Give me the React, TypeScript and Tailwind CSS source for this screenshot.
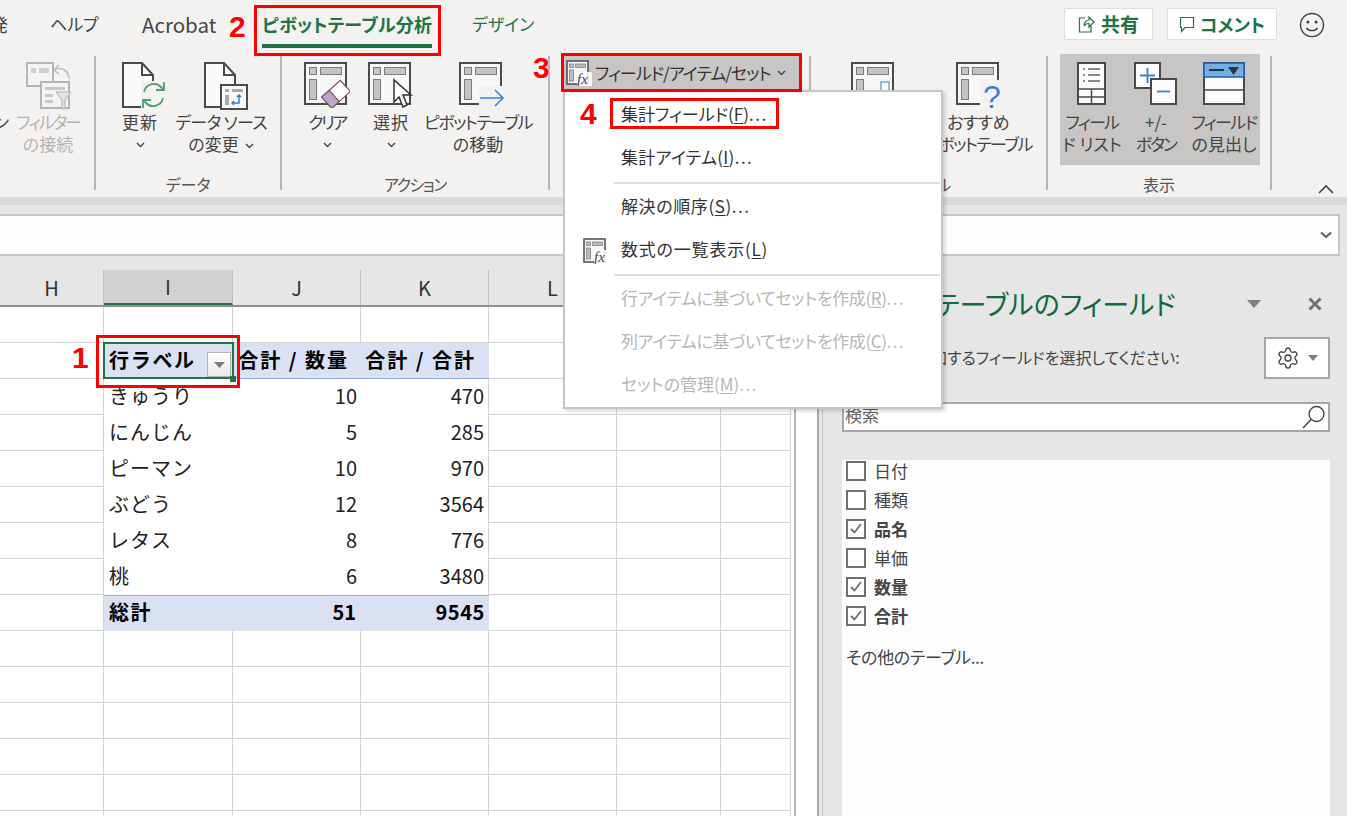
import type { ReactNode } from 'react';
import { Settings } from 'lucide-react';

const FONT = "[font-family:'Noto_Sans_CJK_JP','Noto_Sans',sans-serif] [font-feature-settings:'palt']";

function PivotBase({ children, w = 44, h = 46 }: { children?: ReactNode; w?: number; h?: number }) {
  return (
    <svg width={w} height={h} viewBox={`0 0 ${w} ${h}`}>
      <rect x="1" y="1" width="41" height="41" fill="#f7f7f7" stroke="#4a4a4a" strokeWidth="2" />
      <rect x="5.5" y="5.5" width="7" height="7" fill="#c4c4c4" stroke="#7a7a7a" />
      <rect x="16.5" y="5.5" width="21" height="7" fill="#c4c4c4" stroke="#7a7a7a" />
      <rect x="5.5" y="17.5" width="7" height="20" fill="#c4c4c4" stroke="#7a7a7a" />
      {children}
    </svg>
  );
}

function PageBase({ children }: { children?: ReactNode }) {
  return (
    <svg width="44" height="48" viewBox="0 0 44 48">
      <path d="M1 1H20L31 13V45H1Z" fill="#fafafa" stroke="#4a4a4a" strokeWidth="2" />
      <path d="M20 1V13H31" fill="none" stroke="#4a4a4a" strokeWidth="2" />
      {children}
    </svg>
  );
}

function FxIcon({ size = 26 }: { size?: number }) {
  return (
    <svg width={size} height={size} viewBox="0 0 26 26">
      <rect x="1" y="1" width="21" height="23" fill="#f4f4f4" stroke="#555" strokeWidth="1.6" />
      <rect x="3.5" y="4" width="4" height="3.5" fill="#bbb" stroke="#777" strokeWidth=".7" />
      <rect x="9.5" y="4" width="10" height="3.5" fill="#bbb" stroke="#777" strokeWidth=".7" />
      <rect x="3.5" y="10" width="4" height="11" fill="#bbb" stroke="#777" strokeWidth=".7" />
      <rect x="11" y="12" width="15" height="14" fill="#fff" opacity=".85" />
      <text x="11" y="24" fontSize="15" fontStyle="italic" fontFamily="Liberation Serif, serif" fill="#444">fx</text>
    </svg>
  );
}

function Chevron({ className = '' }: { className?: string }) {
  return (
    <svg width="9" height="6" viewBox="0 0 9 6" className={className}>
      <path d="M1 1l3.500 3.500L8 1" fill="none" stroke="#444" strokeWidth="1.400" />
    </svg>
  );
}

function Item({ width, icon, lines, tracks = [], chevron, inlineChevron, disabled, iconPad = '' }: {
  width: string;
  icon?: ReactNode;
  lines: string[];
  tracks?: string[];
  chevron?: boolean;
  inlineChevron?: boolean;
  disabled?: boolean;
  iconPad?: string;
}) {
  return (
    <div className={`${width} flex shrink-0 flex-col items-center`}>
      <div className={`flex h-[55px] w-full items-start justify-center pt-[6px] ${iconPad}`}>{icon}</div>
      <div className={`whitespace-nowrap text-center text-[17px] leading-[22px] ${disabled ? 'text-[#b5b3b1]' : 'text-[#444]'}`}>
        {lines.map((l, i) => (
          <div key={l} className={tracks[i] ?? ''}>
            {l}
            {inlineChevron && i === lines.length - 1 && <Chevron className="ml-[6px] inline-block align-middle" />}
          </div>
        ))}
      </div>
      {chevron && <Chevron className="mt-[9px]" />}
    </div>
  );
}

function Group({ width, label, labelClass = '', children }: { width: string; label?: string; labelClass?: string; children: ReactNode }) {
  return (
    <div className={`${width} flex h-full shrink-0 flex-col border-r-2 border-[#b8b6b4]`}>
      <div className="flex min-h-0 flex-1">{children}</div>
      <div className={`mb-[-5px] h-[22px] text-center text-[16px] leading-[22px] text-[#555] ${labelClass}`}>{label}</div>
    </div>
  );
}

function Ribbon() {
  return (
    <div className="flex h-[149px] bg-[#f3f2f1] pt-[8px] pb-[7px]">
      <Group width="w-[96px]">
        <div className="w-[9px] shrink-0 overflow-hidden pt-[55px] text-right text-[17px] leading-[22px] text-[#444]">
          <span className="float-right">ン</span>
        </div>
        <Item
          width="w-[78px]"
          disabled
          lines={['フィルター', 'の接続']}
          tracks={['tracking-[-2.2px]']}
          iconPad="pl-[4px]"
          icon={
            <svg width="48" height="50" viewBox="0 0 48 50">
              <rect x="1" y="1" width="26" height="23" fill="#f4f4f4" stroke="#b5b5b5" strokeWidth="2" />
              <rect x="5" y="6" width="5" height="5" fill="#d0d0d0" />
              <rect x="13" y="6" width="10" height="5" fill="#d0d0d0" />
              <path d="M28 8c8-4 15 1 15 9M28 8l5-5M28 8l5 4" fill="none" stroke="#bdbdbd" strokeWidth="1.500" />
              <rect x="15" y="20" width="28" height="26" fill="#f4f4f4" stroke="#b5b5b5" strokeWidth="2" />
              <rect x="19" y="25" width="20" height="3" fill="#c8c8c8" />
              <rect x="19" y="32" width="8" height="3" fill="#c8c8c8" />
              <rect x="19" y="38" width="8" height="3" fill="#c8c8c8" />
              <path d="M30 30h15l-6 8v9h-3v-9Z" fill="#e4e4e4" stroke="#b0b0b0" />
            </svg>
          }
        />
      </Group>
      <Group width="w-[186px]" label="データ">
        <div className="w-[16px] shrink-0" />
        <Item
          width="w-[56px]"
          lines={['更新']}
          tracks={['tracking-[1px]']}
          chevron
          iconPad="pl-[8px]"
          icon={
            <PageBase>
              <rect x="19" y="19" width="25" height="28" fill="#f3f2f1" />
              <path d="M22 30a10 10 0 0 1 17-5l3 3M42 20v8h-8M41 36a10 10 0 0 1-17 5l-3-3M21 46v-8h8" fill="none" stroke="#4c9f70" strokeWidth="1.800" />
            </PageBase>
          }
        />
        <Item
          width="w-[106px]"
          lines={['データ ソース', 'の変更']}
          tracks={['tracking-[-0.7px]']}
          inlineChevron
          iconPad="pl-[10px]"
          icon={
            <PageBase>
              <rect x="17" y="23" width="26" height="24" fill="#f7f7f7" stroke="#4a4a4a" strokeWidth="2" />
              <rect x="21" y="27" width="4" height="3" fill="#aaa" />
              <rect x="28" y="27" width="11" height="3" fill="#aaa" />
              <rect x="21" y="33" width="4" height="10" fill="#aaa" />
              <path d="M35 33v8h-7M33 35l2-2 2 2M30 39l-2 2 2 2" fill="none" stroke="#2a7fd0" strokeWidth="1.500" />
            </PageBase>
          }
        />
      </Group>
      <Group width="w-[268px]" label="アクション" labelClass="tracking-[-1.5px]">
        <div className="w-[13px] shrink-0" />
        <Item
          width="w-[64px]"
          lines={['クリア']}
          tracks={['tracking-[-2.5px]']}
          chevron
          icon={
            <PivotBase w={46}>
              <g transform="rotate(-42 32 33)">
                <rect x="20" y="25" width="25" height="15" fill="#fff" stroke="#8a4d66" strokeWidth="1.200" />
                <rect x="20" y="25" width="10" height="15" fill="#b9a6cc" stroke="#8a4d66" strokeWidth="1.200" />
              </g>
            </PivotBase>
          }
        />
        <Item
          width="w-[64px]"
          lines={['選択']}
          tracks={['tracking-[1px]']}
          chevron
          icon={
            <PivotBase w={46}>
              <path d="M26 18L26 40L31 35L35 45L39 43L35 33L43 33Z" fill="#fff" stroke="#333" strokeWidth="1.500" />
            </PivotBase>
          }
        />
        <Item
          width="w-[110px]"
          lines={['ピボットテーブル', 'の移動']}
          tracks={['tracking-[-1.6px]']}
          iconPad="pl-[7px]"
          icon={
            <PivotBase w={46}>
              <rect x="20" y="24" width="26" height="20" fill="#f3f2f1" />
              <path d="M21 36H44M36 28l8 8-8 8" fill="none" stroke="#2f86d6" strokeWidth="1.500" />
            </PivotBase>
          }
        />
      </Group>
      <Group width="w-[261px]" label=" ">
        <div className="ml-[13px] mt-[-1px] flex h-[35px] w-[238px] items-center bg-[#c8c6c4] pl-[3px] text-[17px] text-[#333]">
          <FxIcon />
          <span className="ml-[3px] whitespace-nowrap tracking-[-1px]">フィールド/アイテム/セット</span>
          <Chevron className="ml-[6px]" />
        </div>
      </Group>
      <Group width="w-[237px]" label="ツール">
        <div className="w-[22px] shrink-0" />
        <Item
          width="w-[80px]"
          lines={[]}
          icon={
            <PivotBase>
              <rect x="30" y="20" width="8" height="22" fill="#fff" stroke="#2a7fd0" />
            </PivotBase>
          }
        />
        <div className="w-[10px] shrink-0" />
        <Item
          width="w-[110px]"
          lines={['おすすめ', 'ピボットテーブル']}
          tracks={['tracking-[-0.6px]', 'tracking-[-1.6px]']}
          iconPad="pl-[6px]"
          icon={
            <PivotBase w={50}>
              <rect x="24" y="18" width="26" height="28" fill="#f3f2f1" />
              <text x="27" y="46" fontSize="32" fontFamily="Liberation Sans, sans-serif" fill="#2f86d6">?</text>
            </PivotBase>
          }
        />
      </Group>
      <Group width="w-[224px]" label="表示">
        <div className="ml-[12px] mt-[-2px] flex h-[111px] w-[200px] bg-[#c8c6c4] pt-[2px]">
          <Item
            width="w-[64px]"
            lines={['フィール', 'ド リスト']}
            tracks={['tracking-[-1.7px]']}
            icon={
              <svg width="30" height="44" viewBox="0 0 30 44">
                <rect x="1" y="1" width="27" height="41" fill="#fbfbfb" stroke="#4a4a4a" strokeWidth="2" />
                <path d="M6 7h2M11 7h12M6 13h2M11 13h12M6 19h2M11 19h12" stroke="#666" strokeWidth="1.500" />
                <path d="M1 27H28M1 35H28M14.500 27V42" stroke="#4a4a4a" strokeWidth="1.500" />
              </svg>
            }
          />
          <Item
            width="w-[64px]"
            lines={['+/-', 'ボタン']}
            tracks={['', 'tracking-[-2px]']}
            icon={
              <svg width="44" height="44" viewBox="0 0 44 44">
                <rect x="1" y="1" width="25" height="25" fill="#fbfbfb" stroke="#4a4a4a" strokeWidth="2" />
                <path d="M13.500 6v15M6 13.500h15" stroke="#2f86d6" strokeWidth="1.800" />
                <rect x="17" y="17" width="25" height="25" fill="#fbfbfb" stroke="#4a4a4a" strokeWidth="2" />
                <path d="M23 29.500h13" stroke="#2f86d6" strokeWidth="1.800" />
              </svg>
            }
          />
          <Item
            width="w-[72px]"
            lines={['フィールド', 'の見出し']}
            tracks={['tracking-[-1.6px]']}
            icon={
              <svg width="42" height="44" viewBox="0 0 42 44">
                <rect x="1" y="1" width="40" height="41" fill="#fbfbfb" stroke="#4a4a4a" strokeWidth="2" />
                <rect x="1" y="1" width="40" height="14" fill="#72aee6" stroke="#1f5fa8" strokeWidth="1.500" />
                <path d="M6 8h15" stroke="#333" strokeWidth="2" />
                <path d="M25 5h11l-5.500 8Z" fill="#333" />
                <path d="M1 28H41" stroke="#4a4a4a" strokeWidth="1.500" />
              </svg>
            }
          />
        </div>
      </Group>
      <div className="ml-[46px] mb-[-4px] self-end">
        <svg width="16" height="10" viewBox="0 0 16 10">
          <path d="M1 9l7-7 7 7" fill="none" stroke="#444" strokeWidth="1.600" />
        </svg>
      </div>
    </div>
  );
}

function Tabs() {
  return (
    <div className="flex h-[48px] items-start bg-[#f3f2f1] text-[18px] text-[#444]">
      <span className="ml-[-10px] mt-[11px] w-[18px] leading-[26px]">発</span>
      <span className="ml-[42px] mt-[11px] w-[92px] text-[17px] leading-[26px]">ヘルプ</span>
      <span className="mt-[11px] w-[120px] text-[20.5px] leading-[26px]">Acrobat</span>
      <div className="flex h-[48px] w-[170px] flex-col items-center border-b-[4px] border-[#217346]">
        <span className="mt-[11px] whitespace-nowrap font-bold leading-[26px] tracking-[.2px] text-[#217346]">ピボットテーブル分析</span>
      </div>
      <span className="ml-[40px] mt-[11px] text-[17px] leading-[26px] text-[#217346]">デザイン</span>
      <div className="ml-auto mr-[70px] mt-[8px] flex gap-[14px]">
        <div className="flex h-[32px] w-[89px] items-center justify-center gap-[6px] rounded-[2px] border border-[#e1dfdd] bg-white text-[19px] font-bold text-[#217346]">
          <svg width="17" height="18" viewBox="0 0 17 18">
            <path d="M7 3H1.500V17H13V11M6 11c0-4 3-6 5-6V2l5 5-5 5V8.500c-2 0-4 .5-5 2.500Z" fill="none" stroke="#217346" strokeWidth="1.200" />
          </svg>
          共有
        </div>
        <div className="flex h-[32px] w-[110px] items-center justify-center gap-[5px] rounded-[2px] border border-[#e1dfdd] bg-white font-bold text-[#217346]">
          <svg width="16" height="17" viewBox="0 0 16 17">
            <path d="M1.500 1.500H14.500V11.500H6L2.500 15.500V11.500H1.500Z" fill="none" stroke="#217346" strokeWidth="1.200" />
          </svg>
          コメント
        </div>
      </div>
      <div className="absolute left-[1299px] top-[12px]">
        <svg width="26" height="26" viewBox="0 0 26 26">
          <circle cx="13" cy="13" r="11.500" fill="none" stroke="#444" strokeWidth="1.400" />
          <circle cx="9" cy="10" r="1.500" fill="#444" />
          <circle cx="17" cy="10" r="1.500" fill="#444" />
          <path d="M7.500 16c2.500 3.500 8.500 3.500 11 0" fill="none" stroke="#444" strokeWidth="1.400" />
        </svg>
      </div>
    </div>
  );
}

function FormulaBar() {
  return (
    <>
      <div className="h-[8px] bg-[#dadada]" />
      <div className="bg-[#e6e6e6] pt-[9px]">
        <div className="flex h-[42px] w-[1340px] items-center justify-end border-y-2 border-r-2 border-[#c6c6c6] bg-[#fdfdfd] pr-[6px]">
          <svg width="12" height="8" viewBox="0 0 12 8">
            <path d="M1 1.500l5 4.500 5-4.500" fill="none" stroke="#666" strokeWidth="2.200" />
          </svg>
        </div>
      </div>
    </>
  );
}

const COLS = ['H', 'I', 'J', 'K', 'L', '', ''];
const DATA: [string, string, string][] = [
  ['きゅうり', '10', '470'],
  ['にんじん', '5', '285'],
  ['ピーマン', '10', '970'],
  ['ぶどう', '12', '3564'],
  ['レタス', '8', '776'],
  ['桃', '6', '3480'],
];

const LINE = 'border-r border-b border-[#d4d4d4]';

function Blank({ n = 7 }: { n?: number }) {
  return (
    <>
      {Array.from({ length: n }, (_, i) => (
        <div key={i} className={LINE} />
      ))}
    </>
  );
}

function Sheet() {
  return (
    <div className="flex w-[791px] shrink-0 flex-col pt-[14px]">
      <div className="grid h-[37px] shrink-0 grid-cols-[104px_129px_128px_128px_128px_104px_70px] border-b-2 border-[#8f8f8f] bg-[#e6e6e6]">
        {COLS.map((c, i) => (
          <div
            key={i}
            className={`flex items-center justify-center border-r border-[#bdbdbd] text-[20px] text-[#333] ${
              c === 'I' ? 'border-b-2 border-b-[#217346] bg-[#d2d2d2]' : ''
            }`}
          >
            {c}
          </div>
        ))}
      </div>
      <div className="grid min-h-0 flex-1 auto-rows-[36px] grid-cols-[104px_129px_128px_128px_128px_104px_70px] overflow-hidden bg-white text-[20px] leading-[34px] text-[#222] [font-feature-settings:normal]">
        <Blank />

        {/* pivot header */}
        <div className={LINE} />
        <div className="relative bg-[#d9e1f2] pl-[5px] font-bold tracking-[1.7px] text-black">
          行ラベル
          <div className="absolute left-[-1px] top-[-1px] z-10 h-[37px] w-[131px] border-2 border-[#217346]" />
          <div className="absolute left-[103px] top-[9px] flex h-[25px] w-[24px] items-center justify-center border border-[#b4b4b4] bg-gradient-to-b from-white to-[#e8e8e8]">
            <svg width="11" height="6" viewBox="0 0 11 6">
              <path d="M0 0h11L5.500 6Z" fill="#7a7a7a" />
            </svg>
          </div>
          <div className="absolute left-[126px] top-[33px] z-20 h-[6px] w-[6px] bg-[#217346]" />
        </div>
        <div className="whitespace-nowrap border-b border-[#8ea9db] bg-[#d9e1f2] pr-[12px] text-right font-bold leading-[33px] tracking-[2px] text-black">合計 / 数量</div>
        <div className="whitespace-nowrap border-b border-[#8ea9db] bg-[#d9e1f2] pr-[13px] text-right font-bold leading-[33px] tracking-[2px] text-black">合計 / 合計</div>
        <Blank n={3} />

        {DATA.map(([name, qty, sum]) => (
          <div key={name} className="contents">
            <div className={LINE} />
            <div className="pl-[5px] tracking-[1px]">{name}</div>
            <div className="pr-[4px] text-right">{qty}</div>
            <div className="border-r border-[#d4d4d4] pr-[4px] text-right">{sum}</div>
            <Blank n={3} />
          </div>
        ))}

        {/* grand total */}
        <div className={LINE} />
        <div className="border-t border-[#8ea9db] bg-[#d9e1f2] pl-[5px] font-bold leading-[32px] tracking-[1.5px] text-black">総計</div>
        <div className="border-t border-[#8ea9db] bg-[#d9e1f2] pr-[5px] text-right font-bold leading-[32px] text-black">51</div>
        <div className="border-t border-[#8ea9db] bg-[#d9e1f2] pr-[4px] text-right font-bold leading-[32px] tracking-[.6px] text-black">9545</div>
        <Blank n={3} />

        {Array.from({ length: 6 }, (_, i) => (
          <Blank key={i} />
        ))}
      </div>
    </div>
  );
}

const FIELDS: [string, boolean][] = [
  ['日付', false],
  ['種類', false],
  ['品名', true],
  ['単価', false],
  ['数量', true],
  ['合計', true],
];

function FieldPanel() {
  return (
    <div className="flex min-w-0 flex-1 flex-col border-l-2 border-[#a8a8a8] bg-[#e6e6e6] pl-[23px] pr-[17px] shadow-[inset_3px_0_0_#e6e6e6,inset_4px_0_0_#c8c8c8]">
      <div className="mt-[27px] flex h-[42px] items-center">
        <span className="whitespace-nowrap text-[27px] leading-[42px] text-[#0f6b3e]">ピボットテーブルのフィールド</span>
        <svg width="14" height="8" viewBox="0 0 14 8" className="ml-[71px]">
          <path d="M0 0h14L7 8Z" fill="#7f7f7f" />
        </svg>
        <svg width="14" height="14" viewBox="0 0 14 14" className="ml-[47px]">
          <path d="M1.500 1.500l11 11M12.500 1.500l-11 11" stroke="#6f6f6f" strokeWidth="3" />
        </svg>
      </div>
      <div className="mt-[12px] flex h-[42px] items-center justify-between">
        <span className="mb-[3px] whitespace-nowrap text-[16px] text-[#444]">レポートに追加するフィールドを選択してください:</span>
        <div className="flex h-[42px] w-[66px] items-center justify-center gap-[8px] border-2 border-[#a6a6a6] bg-white">
          <Settings size={24} strokeWidth={1.300} color="#444" />
          <svg width="10" height="6" viewBox="0 0 10 6">
            <path d="M0 0h10L5 6Z" fill="#7f7f7f" />
          </svg>
        </div>
      </div>
      <div className="mt-[23px] flex h-[30px] items-center justify-between border-2 border-[#a6a6a6] bg-white pl-[1px] pr-[2px] text-[17px] text-[#666]">
        <span className="mb-[4px]">検索</span>
        <svg width="24" height="24" viewBox="0 0 24 24">
          <circle cx="14.500" cy="9" r="7.500" fill="none" stroke="#444" strokeWidth="1.300" />
          <path d="M9 14.500L1 23" stroke="#444" strokeWidth="1.500" />
        </svg>
      </div>
      <div className="mt-[28px] min-h-0 flex-1 bg-[#fdfdfd] pl-[4px] text-[17px] text-[#444]">
        <div className="mt-[-4px]">
          {FIELDS.map(([name, on]) => (
            <div key={name} className="flex h-[29px] items-center gap-[8px]">
              <div className="flex h-[20px] w-[20px] items-center justify-center border-2 border-[#6f6f6f] bg-white">
                {on && (
                  <svg width="12" height="11" viewBox="0 0 12 11">
                    <path d="M1 6l3.500 3.500L11 1" fill="none" stroke="#6f6f6f" strokeWidth="1.800" />
                  </svg>
                )}
              </div>
              <span className={on ? 'font-bold' : ''}>{name}</span>
            </div>
          ))}
          <div className="mt-[15px] leading-[24px] tracking-[-.3px]">その他のテーブル...</div>
        </div>
      </div>
    </div>
  );
}

function MenuItem({ pre, k, icon, disabled, dots = true, track = '' }: {
  pre: string;
  k: string;
  icon?: ReactNode;
  disabled?: boolean;
  dots?: boolean;
  track?: string;
}) {
  return (
    <div className={`flex h-[43px] items-center text-[17px] ${disabled ? 'text-[#b8b6b4]' : 'text-[#333]'}`}>
      <div className="flex w-[56px] justify-center pl-[6px]">{icon}</div>
      <span className={`mb-[4px] whitespace-nowrap ${track}`}>
        {pre}(<span className="underline underline-offset-2">{k}</span>)
        {dots && <span className="tracking-[1.5px]">...</span>}
      </span>
    </div>
  );
}

function Menu() {
  return (
    <div className="absolute left-[563px] top-[90px] z-30 h-[319px] w-[380px] border-2 border-[#c6c6c6] bg-white pt-[2px] shadow-[2px_2px_4px_rgba(0,0,0,0.18)]">
      <MenuItem pre="集計フィールド" k="F" />
      <MenuItem pre="集計アイテム" k="I" track="tracking-[.3px]" />
      <div className="ml-[49px] mr-[1px] my-[2px] h-[2px] bg-[#dcdcdc]" />
      <MenuItem pre="解決の順序" k="S" track="tracking-[.6px]" />
      <MenuItem pre="数式の一覧表示" k="L" icon={<FxIcon />} dots={false} track="tracking-[.8px]" />
      <div className="ml-[49px] mr-[1px] my-[2px] h-[2px] bg-[#dcdcdc]" />
      <MenuItem disabled pre="行アイテムに基づいてセットを作成" k="R" track="tracking-[-.4px]" />
      <MenuItem disabled pre="列アイテムに基づいてセットを作成" k="C" track="tracking-[-.4px]" />
      <MenuItem disabled pre="セットの管理" k="M" />
    </div>
  );
}

function Callouts() {
  const num = "absolute z-40 font-['Liberation_Sans',sans-serif] text-[30px] font-bold leading-[32px] text-[#ff0000] [text-shadow:0_0_2px_#fff]";
  const box = 'absolute z-40 border-[3px] border-[#ff0000]';
  return (
    <>
      <div className={`${box} left-[254px] top-[5px] h-[51px] w-[187px]`} />
      <div className={`${box} left-[561px] top-[53px] h-[39px] w-[241px]`} />
      <div className={`${box} left-[610px] top-[98px] h-[31px] w-[169px]`} />
      <div className={`${box} left-[96px] top-[335px] h-[53px] w-[144px]`} />
      <span className={`${num} left-[72px] top-[342px]`}>1</span>
      <span className={`${num} left-[229px] top-[11px]`}>2</span>
      <span className={`${num} left-[533px] top-[52px]`}>3</span>
      <span className={`${num} left-[580px] top-[98px]`}>4</span>
    </>
  );
}

export default function App() {
  return (
    <div className={`relative flex h-[816px] w-[1347px] flex-col overflow-hidden bg-[#e6e6e6] ${FONT}`}>
      <Tabs />
      <Ribbon />
      <FormulaBar />
      <div className="flex min-h-0 flex-1">
        <Sheet />
        <div className="w-[3px] shrink-0 bg-white" />
        <div className="w-[2px] shrink-0 bg-[#b4b4b4]" />
        <div className="w-[21px] shrink-0 bg-white" />
        <FieldPanel />
      </div>
      <Menu />
      <Callouts />
    </div>
  );
}
